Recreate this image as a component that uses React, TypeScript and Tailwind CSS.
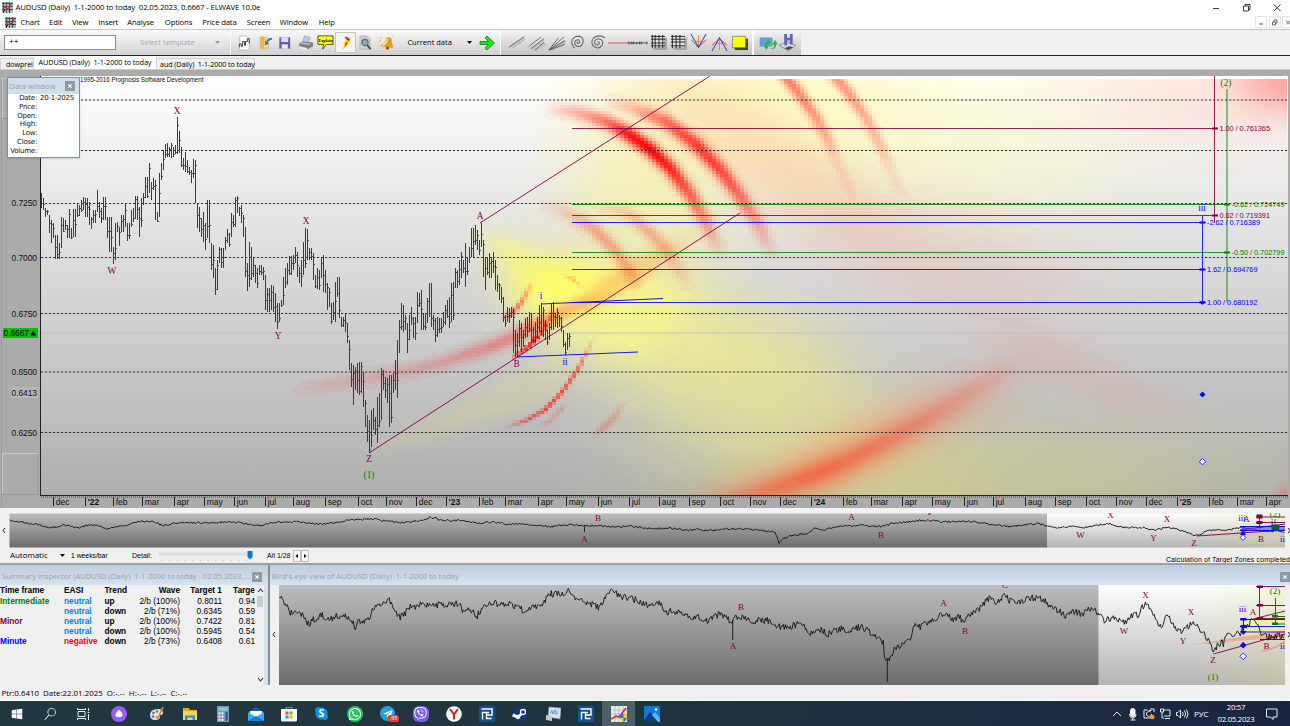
import type { ReactNode } from "react";
import { FaWhatsapp, FaViber, FaSkype, FaSteam, FaTelegramPlane, FaWindows } from "react-icons/fa";
import { VscSearch } from "react-icons/vsc";

type Point = [number, number];
type Bar = [number, number, number];

const MAROON = "#800040";
const GREEN = "#008000";
const BLUE = "#0000ff";

/* price bars: x, high, low - stored in thirds of a pixel from the origin of the block */
const BLOCK_A: number[] = [
    124, 100, 145, 130, 115, 150, 136, 145, 172, 148, 165, 220, 156, 180, 250, 162, 190, 235, 168, 225, 298, 175, 250, 298,
    181, 172, 265, 190, 175, 215, 200, 195, 235, 208, 148, 235, 216, 205, 238, 222, 148, 230, 232, 130, 170, 244, 120, 155,
    252, 112, 150, 258, 115, 170, 266, 125, 195, 275, 170, 208, 282, 150, 190, 289, 90, 155, 297, 125, 175, 304, 145, 190,
    312, 110, 180, 320, 170, 235, 330, 172, 275, 338, 260, 313, 344, 190, 300, 352, 185, 215, 358, 200, 258, 366, 165, 215,
    374, 130, 200, 385, 190, 238, 392, 150, 200, 400, 145, 185, 410, 108, 180, 417, 140, 230, 424, 115, 200, 432, 100, 135,
    438, 50, 115, 446, 10, 100, 452, 65, 120, 460, 55, 90, 466, 60, 180, 474, 155, 185, 480, 38, 170, 486, 10, 60,
    492, -30, 30, 498, -48, -5, 504, -50, -10, 510, -38, -8, 516, -52, -5, 522, -40, -10, 527, -45, -18, 531, -128, -18,
    537, -86, -22, 543, -38, 20, 549, -5, 30, 555, -25, 35, 561, 0, 40, 567, 20, 45, 574, 30, 70, 578, -2, 55,
    584, 0, 130, 590, 130, 205, 598, 140, 215, 604, 175, 230, 610, 155, 245, 616, 190, 270, 622, 120, 235, 628, 120, 250,
    634, 250, 330, 640, 255, 355, 646, 325, 405, 654, 300, 390, 660, 262, 310, 666, 265, 325, 674, 230, 270, 678, 207, 250,
    688, 220, 260, 694, 160, 232, 702, 165, 200, 708, 112, 200, 713, 108, 160, 720, 140, 168, 726, 135, 190, 732, 165, 232,
    738, 200, 350, 743, 310, 393, 750, 245, 380, 756, 262, 360, 762, 295, 350, 768, 315, 370, 774, 325, 385, 780, 315, 345,
    788, 320, 360, 796, 345, 450, 804, 385, 455, 812, 375, 450, 818, 378, 455, 824, 400, 485, 832, 430, 508, 838, 430, 485,
    843, 420, 440, 848, 350, 435, 855, 325, 385, 862, 310, 375, 870, 288, 345, 878, 285, 330, 884, 262, 310, 890, 275, 352,
    896, 320, 370, 904, 300, 380, 910, 245, 345, 918, 205, 325, 924, 208, 300, 930, 265, 300, 938, 280, 360, 946, 345, 385,
    956, 330, 390, 962, 290, 355, 967, 285, 395, 974, 330, 400, 980, 370, 450, 986, 385, 440, 994, 430, 492, 1000, 425, 480,
    1006, 365, 485, 1013, 350, 410, 1018, 350, 475, 1026, 470, 500, 1034, 462, 515, 1042, 490, 550, 1048, 540, 630,
    1054, 610, 680, 1060, 615, 735, 1066, 620, 690, 1076, 605, 705, 1086, 605, 700, 1092, 635, 740, 1098, 720, 800,
    1104, 765, 845, 1108, 780, 880, 1114, 750, 860, 1120, 745, 810, 1128, 770, 825, 1134, 710, 850, 1140, 700, 800,
    1146, 625, 780, 1152, 630, 690, 1158, 650, 715, 1164, 655, 730, 1170, 645, 800, 1176, 645, 790, 1182, 640, 700,
    1188, 600, 690, 1192, 540, 715, 1198, 480, 580, 1204, 430, 510, 1210, 435, 515, 1216, 465, 510, 1222, 490, 580,
    1228, 465, 540, 1234, 440, 495, 1240, 470, 535, 1248, 470, 540, 1254, 395, 490, 1260, 400, 440, 1266, 390, 510,
    1272, 460, 510, 1280, 415, 490, 1286, 370, 470,
];
const BLOCK_B: number[] = [
    150, 630, 730, 156, 640, 770, 162, 735, 780, 168, 745, 815, 174, 740, 800, 180, 745, 790, 188, 725, 770, 196, 705, 765,
    204, 690, 745, 210, 680, 775, 216, 640, 755, 222, 635, 750, 228, 595, 655, 234, 600, 655, 240, 570, 645, 246, 545, 625,
    252, 570, 610, 258, 520, 650, 264, 560, 615, 270, 530, 580, 276, 475, 560, 284, 465, 525, 290, 480, 540, 296, 510, 555,
    302, 458, 530, 308, 510, 620, 314, 560, 660, 320, 560, 615, 326, 550, 625, 332, 560, 625, 338, 545, 610, 344, 570, 660,
    350, 615, 665, 356, 640, 690, 362, 650, 700, 368, 680, 755, 374, 735, 770, 380, 710, 755, 386, 715, 760, 392, 710, 745,
    398, 715, 850, 404, 780, 860, 410, 790, 860, 416, 750, 830, 422, 760, 845, 428, 780, 830, 434, 745, 805, 440, 740, 800,
    446, 725, 785, 452, 730, 820, 458, 770, 820, 464, 755, 820, 470, 740, 805, 476, 705, 790, 482, 700, 795, 488, 710, 800,
    494, 750, 810, 500, 780, 825, 506, 760, 810, 512, 700, 780, 518, 695, 780, 524, 730, 770, 530, 715, 775, 536, 735, 770,
    542, 740, 785, 548, 780, 830, 554, 815, 855, 560, 790, 840, 567, 790, 830,
];

const toBars = (block: number[], ox: number, oy: number): Bar[] => {
    const out: Bar[] = [];
    for (let i = 0; i < block.length; i += 3) {
        out.push([ox + block[i] / 3, oy + block[i + 1] / 3, oy + block[i + 2] / 3]);
    }
    return out;
};

const keyBars = [...toBars(BLOCK_A, 0, 160), ...toBars(BLOCK_B, 380, 70)];

const noise = (n: number) => {
    const s = Math.sin(n * 127.1) * 43758.5453;
    return s - Math.floor(s) - 0.5;
};

const buildBars = () => {
    let bars = "";
    let ticks = "";
    let k = 0;
    for (let x = 41; x < 570; x += 2) {
        while (k < keyBars.length - 2 && keyBars[k + 1][0] < x) k++;
        const a = keyBars[k];
        const b = keyBars[k + 1];
        const near = Math.abs(a[0] - x) < Math.abs(b[0] - x) ? a : b;
        const hi = Math.round(near[1] + (Math.abs(near[0] - x) > 1 ? noise(x) * 5 : 0));
        const lo = Math.round(near[2] + (Math.abs(near[0] - x) > 1 ? noise(x + 7) * 5 : 0));
        const close = Math.round(hi + (lo - hi) * (0.5 + noise(x + 3) * 0.8));
        bars += `M${x + 0.5} ${hi}V${lo}`;
        ticks += `M${x + 1} ${close + 0.5}h1`;
    }
    return { bars, ticks };
};

/* target zones: x, y, strength along the arc, and the half width */
interface Zone {
    pts: Bar[];
    w: number;
}

const ZONES: Zone[] = [
    { w: 7.5, pts: [[540, 108, 0], [575, 112, 0.25], [605, 121, 0.5], [628, 134, 0.9], [650, 149, 1], [670, 168, 0.85], [690, 194, 0.6], [706, 222, 0.35], [718, 248, 0.1], [724, 262, 0]] },
    { w: 7.5, pts: [[600, 101, 0], [630, 107, 0.2], [665, 121, 0.55], [697, 145, 0.75], [722, 172, 0.7], [742, 199, 0.5], [757, 222, 0.3], [770, 250, 0.08], [776, 262, 0]] },
    { w: 7, pts: [[535, 204, 0], [565, 211, 0.12], [595, 230, 0.28], [615, 250, 0.28], [630, 272, 0.25], [640, 290, 0]] },
    { w: 7, pts: [[590, 205, 0], [625, 212, 0.14], [650, 232, 0.26], [670, 254, 0.2], [687, 284, 0.05], [692, 292, 0]] },
    { w: 6, pts: [[778, 68, 0.5], [795, 88, 0.48], [815, 116, 0.38], [828, 140, 0.26], [837, 162, 0.1], [850, 190, 0.06], [856, 204, 0]] },
    { w: 6, pts: [[828, 68, 0.42], [846, 90, 0.38], [865, 116, 0.3], [880, 145, 0.22], [890, 168, 0.09], [900, 190, 0.05], [905, 200, 0]] },
    { w: 2, pts: [[508, 427, 0.08], [525, 421, 0.45], [545, 410, 0.62], [562, 392, 0.62], [577, 371, 0.5], [588, 350, 0.2], [594, 335, 0]] },
    { w: 2.6, pts: [[535, 428, 0], [550, 421, 0.16], [560, 411, 0.15], [568, 398, 0]] },
    { w: 3.5, pts: [[590, 437, 0], [603, 428, 0.22], [615, 417, 0.16], [626, 400, 0]] },
    { w: 2.5, pts: [[500, 321, 0], [512, 314, 0.5], [521, 303, 0.45], [530, 287, 0.15], [533, 280, 0]] },
    { w: 2.2, pts: [[514, 357, 0.4], [528, 347, 0.9], [541, 334, 0.8], [549, 320, 0.7], [554, 308, 0]] },
    { w: 2, pts: [[560, 274, 0], [573, 279, 0.22], [584, 289, 0]] },
    { w: 7.5, pts: [[285, 392, 0], [320, 386, 0.08], [370, 378, 0.14], [430, 366, 0.18], [475, 352, 0.28], [505, 341, 0.34], [535, 326, 0.36], [570, 308, 0.2], [600, 298, 0.06], [620, 294, 0]] },
];

const CELL_W = 4;
const CELL_H = 3;
const LEVELS = 32;

const buildZoneCells = () => {
    const field = new Map<string, number>();
    ZONES.forEach(({ pts, w }) => {
        for (let i = 0; i < pts.length - 1; i++) {
            const [ax, ay, as] = pts[i];
            const [bx, by, bs] = pts[i + 1];
            const x0 = Math.floor((Math.min(ax, bx) - w * 2.5) / CELL_W);
            const x1 = Math.ceil((Math.max(ax, bx) + w * 2.5) / CELL_W);
            const y0 = Math.floor((Math.min(ay, by) - w * 2.5) / CELL_H);
            const y1 = Math.ceil((Math.max(ay, by) + w * 2.5) / CELL_H);
            const len2 = (bx - ax) ** 2 + (by - ay) ** 2;
            for (let cx = x0; cx < x1; cx++) {
                for (let cy = y0; cy < y1; cy++) {
                    const px = (cx + 0.5) * CELL_W;
                    const py = (cy + 0.5) * CELL_H;
                    const t = Math.max(0, Math.min(1, ((px - ax) * (bx - ax) + (py - ay) * (by - ay)) / len2));
                    const dist = Math.hypot(px - ax - t * (bx - ax), py - ay - t * (by - ay));
                    const v = (as + t * (bs - as)) * Math.exp(-((dist / w) ** 2));
                    const key = `${cx},${cy}`;
                    if (v > 0.015 && v > (field.get(key) || 0)) field.set(key, v);
                }
            }
        }
    });
    const paths: string[] = Array(LEVELS + 1).fill("");
    field.forEach((v, key) => {
        const [cx, cy] = key.split(",").map(Number);
        paths[Math.round(v * LEVELS)] += `M${cx * CELL_W} ${cy * CELL_H}h4v3h-4z`;
    });
    return paths;
};

const chartBars = buildBars();
const zonePaths = buildZoneCells();

const GRID_Y = [99.5, 150, 203, 257, 313, 371.5, 432];
const PRICES: [string, number][] = [
    ["0.7250", 203], ["0.7000", 258], ["0.6750", 313.5], ["0.6500", 372], ["0.6413", 393], ["0.6250", 433],
];
const MONTHS: [string, number][] = [
    ["dec", 53], ["'22", 85], ["feb", 113], ["mar", 142], ["apr", 174], ["may", 204], ["jun", 234], ["jul", 265],
    ["aug", 293], ["sep", 325], ["oct", 358], ["nov", 386], ["dec", 416], ["'23", 446], ["feb", 479], ["mar", 505],
    ["apr", 538], ["may", 566], ["jun", 598], ["jul", 629], ["aug", 659], ["sep", 689], ["oct", 720], ["nov", 750],
    ["dec", 780], ["'24", 811], ["feb", 843], ["mar", 871], ["apr", 902], ["may", 932], ["jun", 964], ["jul", 993],
    ["aug", 1025], ["sep", 1055], ["oct", 1086], ["nov", 1116], ["dec", 1146], ["'25", 1177], ["feb", 1209],
    ["mar", 1237], ["apr", 1266],
];
const WAVES: [string, number, number, string][] = [
    ["X", 177, 114, MAROON], ["W", 112, 274, MAROON], ["X", 306, 224, MAROON], ["Y", 278, 339, MAROON],
    ["A", 480, 219, MAROON], ["B", 516.5, 367, MAROON], ["Z", 369, 462, MAROON], ["(1)", 369, 478, GREEN],
    ["i", 541, 299, BLUE], ["ii", 565, 365, BLUE], ["iii", 1202, 211, BLUE], ["(2)", 1226, 86, GREEN],
];
/* label, y, x of the marker, colour */
const TARGETS: [string, number, number, string][] = [
    ["1.00 / 0.761365", 128, 1215, MAROON], ["-0.62 / 0.724749", 204, 1227, GREEN], ["0.62 / 0.719391", 215.5, 1215, MAROON],
    ["-2.62 / 0.716389", 222, 1202.5, BLUE], ["-0.50 / 0.702799", 252, 1227, GREEN], ["1.62 / 0.694769", 269.5, 1202.5, BLUE],
    ["1.00 / 0.680192", 302.5, 1202.5, BLUE],
];

const Blob = ({ id, cx, cy, rx, ry, rotate = 0 }: { id: string; cx: number; cy: number; rx: number; ry: number; rotate?: number }) => (
    <ellipse cx={cx} cy={cy} rx={rx} ry={ry} fill={`url(#${id})`} transform={`rotate(${rotate} ${cx} ${cy})`} />
);

const Radial = ({ id, color, alpha }: { id: string; color: string; alpha: number }) => (
    <radialGradient id={id}>
        <stop offset="0" stopColor={color} stopOpacity={alpha} />
        <stop offset="0.35" stopColor={color} stopOpacity={alpha * 0.78} />
        <stop offset="0.7" stopColor={color} stopOpacity={alpha * 0.25} />
        <stop offset="1" stopColor={color} stopOpacity={0} />
    </radialGradient>
);

const MainChart = () => (
    <svg width="1290" height="432" viewBox="0 76 1290 432" className="block shrink-0 font-['Liberation_Sans',Arial,sans-serif]">
        <defs>
            <linearGradient id="sky" x1="0" y1="0" x2="0" y2="1">
                <stop offset="0" stopColor="#ffffff" />
                <stop offset="1" stopColor="#afafaf" />
            </linearGradient>
            <Radial id="hot" color="#ffff58" alpha={0.85} />
            <Radial id="cream" color="#fff2a0" alpha={0.55} />
            <Radial id="lemon" color="#f8f49a" alpha={0.6} />
            <Radial id="pale" color="#ffffa8" alpha={0.3} />
            <Radial id="olive" color="#f0f08c" alpha={0.55} />
            <Radial id="moss" color="#e0e07a" alpha={0.42} />
            <Radial id="amber" color="#ffb050" alpha={0.55} />
            <Radial id="peach" color="#ffa080" alpha={0.26} />
            <Radial id="rose" color="#e89080" alpha={0.17} />
            <Radial id="corner" color="#ff4040" alpha={0.42} />
            <clipPath id="plot">
                <rect x="41" y="76" width="1247" height="419" />
            </clipPath>
            <clipPath id="heat">
                <rect x="41" y="79" width="1246" height="416" />
            </clipPath>
            <linearGradient id="sweep" gradientUnits="userSpaceOnUse" x1="690" y1="0" x2="1050" y2="0">
                <stop offset="0" stopColor="#ff5030" stopOpacity="0.25" />
                <stop offset="0.35" stopColor="#f84c30" stopOpacity="0.75" />
                <stop offset="0.6" stopColor="#f05040" stopOpacity="0.5" />
                <stop offset="0.85" stopColor="#e86858" stopOpacity="0.22" />
                <stop offset="1" stopColor="#e08070" stopOpacity="0" />
            </linearGradient>
            <filter id="b6" x="-30%" y="-30%" width="160%" height="160%"><feGaussianBlur stdDeviation="6" /></filter>
            <filter id="b14" x="-30%" y="-30%" width="160%" height="160%"><feGaussianBlur stdDeviation="14" /></filter>
        </defs>
        <rect x="0" y="76" width="1290" height="432" fill="#ababab" />
        <rect x="41" y="76" width="1247" height="419" fill="url(#sky)" />

        <g clipPath="url(#heat)">
            <Blob id="cream" cx={740} cy={95} rx={230} ry={170} />
            <Blob id="lemon" cx={640} cy={215} rx={130} ry={150} />
            <Blob id="pale" cx={870} cy={100} rx={320} ry={120} />
            <Blob id="pale" cx={950} cy={170} rx={280} ry={110} />
            <Blob id="olive" cx={760} cy={405} rx={270} ry={130} rotate={22} />
            <Blob id="moss" cx={960} cy={490} rx={420} ry={115} />
            <Blob id="olive" cx={690} cy={340} rx={200} ry={90} rotate={12} />
            <path d="M482 228L600 262L700 290L640 360L570 340L500 300Z" fill="#ffff70" fillOpacity="0.45" filter="url(#b14)" />
            <path d="M482 230L560 264L560 300L525 290Z" fill="#ffff58" fillOpacity="0.32" filter="url(#b6)" />
            <path d="M369 452L560 350L560 400L420 442Z" fill="#e8e870" fillOpacity="0.18" filter="url(#b6)" />
            <Blob id="hot" cx={568} cy={288} rx={75} ry={44} />
            <Blob id="pale" cx={600} cy={320} rx={130} ry={70} />
            <Blob id="amber" cx={625} cy={278} rx={100} ry={20} rotate={-32} />
            <Blob id="peach" cx={780} cy={165} rx={230} ry={65} rotate={34} />
            <Blob id="rose" cx={930} cy={250} rx={240} ry={90} rotate={18} />
            <Blob id="rose" cx={1080} cy={370} rx={150} ry={40} rotate={25} />
            <Blob id="peach" cx={1230} cy={80} rx={240} ry={100} />
            <Blob id="corner" cx={1295} cy={75} rx={90} ry={60} />
            <Blob id="corner" cx={1290} cy={500} rx={22} ry={22} />
            <Blob id="peach" cx={870} cy={440} rx={240} ry={60} rotate={-26} />
            <path d="M690 512C770 490 800 482 842 463C890 441 950 410 1050 350" fill="none" stroke="url(#sweep)" strokeWidth="22" filter="url(#b14)" />
            <path d="M700 512C780 488 810 477 842 463C890 441 940 412 1010 368" fill="none" stroke="url(#sweep)" strokeWidth="12" filter="url(#b6)" />
            {zonePaths.map((d, i) => (
                <path key={i} d={d} fill="#ff0000" fillOpacity={i / LEVELS} shapeRendering="crispEdges" />
            ))}
        </g>

        <g clipPath="url(#plot)" fill="none">
            {GRID_Y.map((y) => (
                <line key={y} x1="41" x2="1288" y1={y + 0.5} y2={y + 0.5} stroke="#333" strokeDasharray="2.2 1.8" />
            ))}
            <path d="M41 333H1288" stroke="#bcbcbc" strokeWidth="0.8" />
            <path d={chartBars.bars} stroke="#3c3c3c" strokeWidth="1" shapeRendering="crispEdges" />
            <path d={chartBars.ticks} stroke="#555" strokeWidth="1" shapeRendering="crispEdges" />
            <path d="M369 453L740 213M480 223L710 76" stroke={MAROON} strokeWidth="0.9" />
            <path d="M541 304L663 298.5M517 357L638 352" stroke={BLUE} strokeWidth="0.9" />
            <g shapeRendering="crispEdges" strokeOpacity="0.85">
                {TARGETS.map(([label, y, x, color]) => (
                    <path key={label} d={`M572 ${Math.floor(y) + 0.5}H${x}`} stroke={color} />
                ))}
                <path d="M1214.5 76V223" stroke={MAROON} />
                <path d="M1202.5 216V302" stroke={BLUE} />
            </g>
            <path d="M1227 89V302" stroke={GREEN} strokeOpacity="0.55" strokeWidth="1.6" />
        </g>

        {TARGETS.map(([label, y, x, color]) => (
            <g key={label} fill={color}>
                <rect x={x - 3} y={Math.floor(y) - 0.5} width="6" height="2" />
                <text x={x + 4.5} y={y + 2.8} fontSize="7.4" textLength={label.length > 15 ? 53 : 50.5}>
                    {label}
                </text>
            </g>
        ))}
        <path d="M1199.5 301.5h6l-3 3.5z" fill={BLUE} />
        <path d="M1202.5 391.5l3 3l-3 3l-3-3z" fill={BLUE} />
        <path d="M1202.5 458.5l3.2 3.2l-3.2 3.2l-3.2-3.2z" fill="#fff" stroke={BLUE} strokeWidth="0.8" />

        {WAVES.map(([label, x, y, color], i) => (
            <text key={i} x={x} y={y} fill={color} fontSize="9.3" textAnchor="middle" className="font-['Liberation_Serif',serif]">
                {label}
            </text>
        ))}
        <text x="80" y="82" fontSize="6.3" fill="#111" textLength="123.5">1995-2016 Prognosis Software Development</text>

        {/* price axis */}
        <path d="M2.5 118V78.5H38M2.5 493V453.5H38" fill="none" stroke="#c8c8c8" />
        <path d="M38 78.5V118.5H3M38 453.5V494.5H2.5" fill="none" stroke="#999" />
        <path d="M1.5 82V508" stroke="#9c9c9c" />
        {PRICES.map(([label, y]) => (
            <g key={label}>
                {label === "0.6413" && <rect x="11" y="387" width="27" height="11" fill="#b6b6b6" />}
                <text x="37" y={y + 3} fontSize="8.5" textAnchor="end" textLength="25.5" fill="#111">
                    {label}
                </text>
            </g>
        ))}
        <rect x="3" y="328" width="35" height="10" fill="#00c000" />
        <text x="3.5" y="336" fontSize="8.5" textLength="25.5">0.6667</text>
        <path d="M30.5 335.5h5.5l-2.75-5z" />
        <path d="M40.5 76V495.5H1288" fill="none" stroke="#222" shapeRendering="crispEdges" />

        {/* time axis */}
        <path d="M41 497H1288" stroke="#444" strokeWidth="1" strokeDasharray="1 1" />
        {MONTHS.map(([label, x]) => (
            <g key={x}>
                <path d={`M${x + 0.5} 497V506`} stroke="#222" shapeRendering="crispEdges" />
                <text x={x + 2.7} y="504.6" fontSize="8.5" fontWeight={label[0] === "'" ? 700 : 400} fill="#111">
                    {label}
                </text>
            </g>
        ))}
    </svg>
);

/* overview lines, thirds of a pixel below y=490 */
const third = (flat: number[], ox: number): Point[] => {
    const out: Point[] = [];
    for (let i = 0; i < flat.length; i += 2) out.push([ox + flat[i] / 3, 490 + flat[i + 1] / 3]);
    return out;
};

const BIRD: Point[] = [
    ...third([838, 325, 848, 330, 858, 345, 870, 365, 880, 375, 895, 370, 910, 370, 920, 395, 930, 405, 940, 380, 950, 402, 962, 370, 975, 380, 990, 388, 1005, 380, 1015, 380, 1030, 370, 1045, 380, 1060, 400, 1066, 412, 1075, 395, 1090, 395, 1105, 390, 1115, 370, 1125, 345, 1140, 345, 1150, 335, 1165, 328, 1175, 335, 1185, 368, 1200, 382, 1215, 370, 1230, 348, 1245, 355, 1260, 345, 1280, 345], 0),
    ...third([0, 340, 20, 345, 50, 345, 85, 340, 100, 362, 120, 355, 140, 382, 160, 345, 190, 337, 210, 345, 230, 337, 250, 350, 285, 362, 320, 350, 340, 340, 360, 308, 370, 315, 390, 312, 415, 302, 430, 322, 455, 325, 470, 340, 505, 350, 530, 320, 550, 300, 570, 320, 600, 325, 635, 335, 655, 350, 690, 342, 705, 365, 760, 365, 785, 385, 800, 378, 835, 395, 855, 378, 875, 370, 905, 395, 911, 385, 935, 380, 960, 392, 1010, 390, 1050, 410, 1080, 410, 1115, 400, 1135, 428, 1155, 430, 1175, 417, 1195, 433, 1230, 415, 1255, 425], 430),
    ...third([0, 410, 20, 420, 40, 435, 70, 455, 75, 510, 81, 515, 88, 510, 100, 480, 125, 465, 150, 455, 163, 402, 180, 412, 210, 395, 235, 380, 255, 368, 270, 375, 280, 395, 295, 380, 315, 397, 325, 380, 345, 365, 365, 350, 385, 325, 405, 335, 420, 328, 433, 314, 445, 330, 470, 343, 490, 330, 515, 322, 550, 330, 570, 345, 590, 360, 620, 378, 640, 362, 665, 375, 695, 352, 715, 375, 730, 390, 765, 385, 793, 398, 815, 375, 835, 375, 848, 352, 858, 344, 875, 360, 890, 390, 903, 412, 922, 380, 940, 405, 965, 428, 985, 410, 1000, 397, 1020, 415, 1045, 450, 1062, 488, 1075, 460, 1090, 460, 1100, 428, 1120, 430, 1140, 430, 1160, 405, 1175, 395, 1190, 402, 1205, 430, 1220, 440, 1240, 440, 1260, 435, 1272, 440], 860),
];
const STRIP: Point[] = [
    ...third([30, 92, 60, 95, 90, 102, 120, 105, 150, 114, 175, 110, 190, 103, 215, 110, 240, 112, 265, 105, 300, 108, 320, 117, 350, 110, 380, 108, 400, 97, 450, 93, 490, 107, 520, 100, 560, 97, 600, 99, 700, 96, 740, 102, 780, 107, 830, 96, 890, 95, 950, 102, 1000, 99, 1050, 90, 1125, 86, 1150, 92, 1200, 98, 1260, 92], 0),
    ...third([0, 83, 15, 82, 25, 90, 100, 92, 150, 100, 190, 96, 230, 102, 280, 103, 360, 110, 420, 104, 461, 108, 500, 107, 560, 112, 590, 108, 650, 115, 720, 115, 780, 121, 800, 118, 830, 123, 900, 116, 970, 118, 1035, 127, 1048, 162, 1055, 148, 1080, 138, 1130, 130, 1155, 115, 1180, 120, 1220, 110], 430),
    ...third([0, 105, 60, 110, 90, 102, 150, 95, 208, 90, 240, 96, 330, 94, 370, 100, 450, 110, 530, 100, 590, 113, 640, 108, 670, 113, 745, 100, 790, 112, 850, 113, 880, 120, 925, 111, 975, 125, 1010, 138, 1050, 120, 1100, 120, 1145, 112, 1200, 122, 1272, 124], 860),
];

const wiggle = (pts: Point[], amp: number) => {
    let d = "";
    let k = 0;
    for (let x = pts[0][0]; x <= pts[pts.length - 1][0]; x += 1) {
        while (k < pts.length - 2 && pts[k + 1][0] < x) k++;
        const [ax, ay] = pts[k];
        const [bx, by] = pts[k + 1];
        const y = ay + ((by - ay) * (x - ax)) / (bx - ax || 1) + noise(x) * amp;
        d += `${d ? "L" : "M"}${x.toFixed(1)} ${y.toFixed(1)}`;
    }
    return d;
};

/* long thin spikes fall between samples, so they are drawn apart */
const birdPath = wiggle(BIRD, 7) + "M732.7 620V640M887.3 658V682";
const stripPath = wiggle(STRIP, 2) + "M584.5 526V532";

const Labels = ({ items }: { items: [string, number, number, string][] }) => (
    <>
        {items.map(([label, x, y, color], i) => (
            <text key={i} x={x} y={y} fill={color} fontSize="9" textAnchor="middle" className="font-['Liberation_Serif',serif]">
                {label}
            </text>
        ))}
    </>
);

const Shades = () => (
    <defs>
        <linearGradient id="dark" x1="0" y1="0" x2="0" y2="1">
            <stop offset="0" stopColor="#bdbdbd" />
            <stop offset="1" stopColor="#6c6c6c" />
        </linearGradient>
        <linearGradient id="light" x1="0" y1="0" x2="0" y2="1">
            <stop offset="0" stopColor="#ffffff" />
            <stop offset="1" stopColor="#b4b4b4" />
        </linearGradient>
        <linearGradient id="tint" x1="0" y1="0" x2="1" y2="0">
            <stop offset="0" stopColor="#e8e080" stopOpacity="0" />
            <stop offset="1" stopColor="#e8e080" stopOpacity="0.25" />
        </linearGradient>
    </defs>
);

const Strip = () => (
    <svg width="1290" height="35" viewBox="0 513 1290 35" className="block shrink-0 bg-[#f0f0f0]">
        <Shades />
        <rect x="9.5" y="513.5" width="1038" height="34" fill="url(#dark)" />
        <rect x="1047" y="513.5" width="238" height="34" fill="url(#light)" />
        <rect x="1195" y="513.5" width="90" height="34" fill="url(#tint)" />
        <path d="M1197 536L1285 524L1285 536Z" fill="#f0a080" fillOpacity="0.25" />
        <path d={stripPath} fill="none" stroke="#1a1a1a" strokeWidth="0.9" />
        <path d="M1197 536L1285 530M1240 530L1285 524M1259.5 515V529M1256 517H1285M1256 522.5H1285" stroke={MAROON} strokeWidth="0.9" fill="none" />
        <path d="M1256.5 514.5h6v4h-6zM1256.5 521h6v3h-6zM1256.5 526h6v2h-6z" fill={MAROON} />
        <rect x="1241" y="526" width="44" height="4" fill="#4040ff" fillOpacity="0.5" />
        <path d="M1240 526.5H1285M1240 530.5H1285M1241 532h5" stroke={BLUE} strokeWidth="0.9" />
        <path d="M1272 525h7v5h-7zM1275 519v8" fill="#006040" stroke="#006040" strokeWidth="0.8" />
        <path d="M1243 531l3 4h-6z" fill={BLUE} />
        <path d="M1243 534.5l2.8 3l-2.8 3l-2.8-3z" fill="#fff" stroke={BLUE} strokeWidth="0.8" />
        <Labels
            items={[
                ["B", 598, 521, MAROON], ["A", 584.5, 542, MAROON], ["A", 851.5, 520, MAROON], ["B", 881, 538, MAROON],
                ["W", 1080.5, 538, MAROON], ["Y", 1153.5, 541, MAROON], ["X", 1167, 522, MAROON], ["X", 1110.5, 518, MAROON],
                ["Z", 1194, 545.5, MAROON], ["iii", 1242, 521, BLUE], ["A", 1246.5, 522, MAROON], ["B", 1261, 542, MAROON],
                ["(2)", 1275, 516.5, GREEN], ["i", 1272, 525, BLUE], ["ii", 1282.5, 542, BLUE],
            ]}
        />
        <path d="M928 514h3" stroke={MAROON} />
        <path d="M5 528l-2 2.5l2 2.5M1288 528l2 2.5l-2 2.5" fill="none" stroke="#222" />
    </svg>
);

const BirdsEye = () => (
    <svg width="1020" height="100" viewBox="270 585 1020 100" className="block bg-[#f0f0f0]">
        <rect x="279" y="585" width="820" height="100" fill="url(#dark)" />
        <rect x="1098.5" y="585" width="186.5" height="100" fill="url(#light)" />
        <rect x="1195" y="585" width="90" height="100" fill="url(#tint)" />
        <rect x="1243" y="618" width="42" height="18" fill="#ffff80" fillOpacity="0.45" />
        <path d="M1190 645L1285 630L1285 637Z" fill="#f08060" fillOpacity="0.45" />
        <path d="M1262 651Q1278 648 1285 641" fill="none" stroke="#f06050" strokeWidth="1.5" strokeOpacity="0.5" />
        <path d={birdPath} fill="none" stroke="#1a1a1a" strokeWidth="0.95" />
        <path d="M1213.5 654L1285 634M1253 619L1285 611M1259.5 586V619M1256 586.5H1285M1256 605.5H1285M1256 618.5H1285" stroke={MAROON} strokeWidth="0.9" fill="none" />
        <path d="M1257 585.5h6v2.5h-6zM1257 604h6v2.5h-6zM1257 617h6v2.5h-6z" fill={MAROON} />
        <path d="M1243.5 619V632M1240 619.5H1285M1240 626.5H1285M1240 632H1285M1260 639.5H1285" stroke={BLUE} strokeWidth="0.9" fill="none" />
        <path d="M1240.5 618h6v2.5h-6zM1240.5 625h6v2.5h-6zM1240.5 631h6l-3 4zM1243.2 642l3.3 3.3l-3.3 3.3l-3.3-3.3z" fill={BLUE} />
        <path d="M1275.5 598V624M1272 616.5H1285M1272 624H1285" stroke={GREEN} />
        <path d="M1272 615h6v2.5h-6zM1272 622.5h6v2.5h-6z" fill={GREEN} />
        <path d="M1243.2 653l3.3 3.3l-3.3 3.3l-3.3-3.3z" fill="#fff" stroke={BLUE} strokeWidth="0.8" />
        <Labels
            items={[
                ["B", 741, 610, MAROON], ["A", 733, 649, MAROON], ["A", 943.5, 606, MAROON], ["B", 965, 634, MAROON],
                ["C", 1005, 588, MAROON], ["W", 1124, 634, MAROON], ["X", 1145.5, 598, MAROON], ["Y", 1183, 644, MAROON],
                ["X", 1191, 615, MAROON], ["Z", 1213, 663, MAROON], ["(1)", 1213, 680, GREEN], ["iii", 1242.5, 612, BLUE],
                ["A", 1253, 615, MAROON], ["(2)", 1275, 594, GREEN], ["B", 1266.5, 648.5, MAROON], ["ii", 1282.5, 649, BLUE],
            ]}
        />
        <path d="M275 632l-2 2.5l2 2.5M1288 632l2 2.5l-2 2.5" fill="none" stroke="#222" />
    </svg>
);

const AppIcon = () => (
    <svg width="11" height="11" viewBox="0 0 11 11">
        <rect width="11" height="11" fill="#a8bcbc" />
        <path d="M0 1.5h11M0 4.500h11M0 7.500h11M1.500 0v11M4.500 0v11M7.500 0v11" stroke="#355" strokeWidth="0.9" />
        <path d="M0 8l3-3l3 2l4-6" stroke="#d82828" strokeWidth="1.3" fill="none" />
        <path d="M1 10l2-2M7 9l2-2" stroke="#111" />
    </svg>
);

const Slot = ({ children, pressed }: { children: ReactNode; pressed?: boolean }) => (
    <div
        className={
            pressed
                ? "flex h-[21px] w-[20.3px] shrink-0 items-center justify-center border border-[#c4c4c4] bg-[#f4f4f4]"
                : "flex h-[21px] w-[20.3px] shrink-0 items-center justify-center"
        }
    >
        <svg width="17" height="17" viewBox="0 0 18 18" className="shrink-0 overflow-visible">
            {children}
        </svg>
    </div>
);

const FileTools = () => (
    <div className="flex">
        <Slot>
            <path d="M4 2h7l3 3v12H4z" fill="#fff" stroke="#aaa" strokeWidth="0.7" />
            <path d="M3.5 14v-3.500h2V13H7V8h2v4h1V8h2V5h2v5" fill="none" stroke="#222" strokeWidth="0.9" />
        </Slot>
        <Slot>
            <path d="M4 3l5-1v13l-5 1z" fill="#e8b850" />
            <path d="M8 4h5v11l-5 2z" fill="#f6d580" stroke="#d8a030" strokeWidth="0.5" />
            <path d="M17 4q-4 0-6 4l-1.500-1v5l4.500-2l-1.500-1q1-3 4.500-3z" fill="#2878d8" />
        </Slot>
        <Slot>
            <path d="M3.5 3.5h11.5v12H3.500z" fill="#6a58b8" />
            <path d="M5.500 3.500h7.500v5H5.500z" fill="#dce0ff" />
            <path d="M6 11h6.500v4.500H6z" fill="#eee" />
        </Slot>
        <Slot>
            <path d="M8 2l6 1.500l-2 6l-6-1z" fill="#b4ccec" stroke="#889" strokeWidth="0.5" />
            <path d="M2 10l4-2l11 1v4l-5 3l-9-2z" fill="#808080" />
            <path d="M3 13l8 2l-2 2l-6-2z" fill="#eee" />
            <path d="M4 9.5l10 1.5" stroke="#ddd" />
        </Slot>
        <Slot>
            <path d="M1 2h16v9h-7l-4 5l1-5H1z" fill="#ff0" stroke="#222" strokeWidth="0.8" />
            <text x="9" y="8.3" fontSize="4.5" fontWeight="700" textAnchor="middle" className="font-['Liberation_Serif',serif]">Explain</text>
        </Slot>
        <Slot pressed>
            <path d="M8 3l5 2l1 2l-7 9.500l-1-.5l1.500-4.500l-1-2l3-2z" fill="#ffd800" />
            <path d="M8 3q4 0 6 3.500l-3 .5zM9.500 8.500l2 1l-3.500 4.500z" fill="#f01818" />
        </Slot>
        <Slot>
            <path d="M3 2h8l3 3v11H3z" fill="#ccc" stroke="#aaa" strokeWidth="0.6" />
            <circle cx="8.5" cy="9" r="3.3" fill="#8ab" stroke="#666" strokeWidth="1.1" />
            <path d="M11 12l3.5 4" stroke="#445" strokeWidth="1.8" />
        </Slot>
        <Slot>
            <path d="M2 12q5-1.500 6-6q1-3.500 4-2.500q3 1 2.500 4.500q0 3 2 6q-6 2-14.500-2z" fill="#e8982c" />
            <path d="M5 12q4-2 5-7" stroke="#ffe49c" strokeWidth="1.8" fill="none" />
            <path d="M2 5l2-2M1 8l2-1M16 3l-1-1" stroke="#e0a040" />
            <circle cx="10" cy="15" r="1.5" fill="#b03010" />
        </Slot>
    </div>
);

const DrawTools = () => (
    <div className="flex">
        <Slot>
            <path d="M4 15L18 5" stroke="#bbb" strokeWidth="2" />
            <path d="M1 14L17 3" stroke="#555" />
        </Slot>
        <Slot>
            <path d="M4 16L17 7M8 18L19 10" stroke="#c0c0c0" strokeWidth="2" />
            <path d="M1 13L14 3M3 15.500L17 5M7 17L17 9" stroke="#555" strokeWidth="0.9" />
        </Slot>
        <Slot>
            <path d="M3 17L18 8" stroke="#bbb" strokeWidth="3" />
            <path d="M1 17L17 3M1 17L18 7M1 17L18 11M1 17L11 4" stroke="#555" strokeWidth="0.9" />
        </Slot>
        <Slot><path d="M6 15Q1 10 4 5Q9 0 14 4Q17 9 12 13Q7 14 6 10Q6 6 10 6Q13 8 10 10Q8 10 9 8" fill="none" stroke="#666" strokeWidth="1.1" /></Slot>
        <Slot><path d="M17 4Q11 0 5 4Q1 9 5 13Q10 17 14 12Q16 6 10 5Q5 6 6 10Q9 13 11 10Q11 8 9 8.5" fill="none" stroke="#666" strokeWidth="1.1" /></Slot>
        <Slot><path d="M-1 9.500h20" stroke="#e04848" strokeWidth="1" /></Slot>
        <Slot><path d="M-2 9.500h21M0 8v3M3 8v3M5 8v3M8 8.500v2.500M11 8v3M13 8v3M19 8v3" stroke="#333" strokeWidth="0.9" /></Slot>
        <Slot>
            <path d="M4 4h14v13H4z" fill="#a8a8a8" />
            <path d="M2 2h13v12H2z" fill="#e8e8e8" />
            <path d="M1 2.500h15M1 5.500h15M1 9.500h15M1 12.500h15M2.500 1v14M5.500 1v14M9.500 1v14M13.500 1v14" stroke="#222" strokeWidth="1" />
        </Slot>
        <Slot>
            <path d="M4 4h14v13H4z" fill="#a8a8a8" />
            <path d="M2 2h13v12H2z" fill="#e8e8e8" />
            <path d="M1 2.500h15M1 5.500h15M1 8.500h15M1 12.500h15M2.500 1v14M6.500 1v14M10.500 1v14" stroke="#222" strokeWidth="1" />
        </Slot>
        <Slot>
            <path d="M1 6L9 14L17 6" fill="none" stroke="#f03030" />
            <path d="M9 1v13M6 8h6" stroke="#f09020" strokeWidth="1.2" />
            <path d="M1 0L9 14L17 0" fill="none" stroke="#4040d8" strokeWidth="1.1" />
        </Slot>
        <Slot>
            <path d="M1 12L9 5L17 12" fill="none" stroke="#f03030" />
            <path d="M9 5v12M6 10h6" stroke="#f09020" strokeWidth="1.2" />
            <path d="M1 18L9 4L17 18" fill="none" stroke="#4040c0" strokeWidth="1.1" />
        </Slot>
        <Slot>
            <path d="M4 5h14v12H4z" fill="#444" />
            <path d="M1.5 2.5h14v12h-14z" fill="#ff0" stroke="#554" strokeWidth="0.6" />
        </Slot>
    </div>
);

const Toolbar = () => (
    <div className="flex h-[26px] shrink-0 items-center border-t border-[#c8c8c8] bg-[#f0f0f0]">
        <div className="flex h-full w-[230px] items-center bg-gradient-to-b from-[#fafafa] to-[#d4d4d4] pl-1">
            <div className="h-[15px] w-[112px] border border-[#8c8c8c] bg-white pl-1 font-['Liberation_Mono',monospace] text-[8px] leading-[12px]">++</div>
            <span className="ml-[24px] w-[75px] text-[7.6px] text-[#a8a8a8]">Select template</span>
            <svg width="6" height="4" viewBox="0 0 6 4"><path d="M0 0h5L2.5 3z" fill="#999" /></svg>
        </div>
        <div className="flex h-full w-[270px] items-center border-l border-[#fafafa] bg-gradient-to-b from-[#fafafa] to-[#cfcfcf] pl-[3px]">
            <FileTools />
            <span className="ml-[11px] w-[60px] whitespace-nowrap text-[7.5px]">Current data</span>
            <svg width="6" height="4" viewBox="0 0 6 4"><path d="M0 0h5L2.5 3z" /></svg>
            <svg width="17" height="16" viewBox="0 0 17 16" className="ml-[6px]">
                <path d="M1 6.500h8.500L6 3l2-2l7.500 7L8 15l-2-2l3.500-3.500H1z" fill="#18e818" stroke="#108010" strokeWidth="0.8" />
            </svg>
        </div>
        <div className="flex h-full w-[252px] items-center border-l border-[#fafafa] bg-gradient-to-b from-[#f4f4f4] to-[#c4c4c4] pl-[5px]">
            <DrawTools />
        </div>
        <div className="flex h-full w-[49px] items-center border-l-2 border-[#fafafa] bg-gradient-to-b from-[#f4f4f4] to-[#c4c4c4] pl-[3px]">
            <Slot>
                <path d="M1 4h13v9H1z" fill="#5ca4d8" stroke="#999" strokeWidth="0.7" />
                <path d="M6 13q0-5 5-6v-2l1 4l-2 2q-1 1-1 2h1l-2 4l-3-4zM13 16h-2l4-1q1-1 1-4h-2l3-5l3 5h-2q0 5-5 5z" fill="#20c030" />
            </Slot>
            <Slot>
                <path d="M0 12l8-4l10 4l-8 6z" fill="#d4d4dc" stroke="#778" strokeWidth="0.8" />
                <path d="M6 15l5-2l4 1l-5 3z" fill="#445" />
                <path d="M5.500 0h3v4h3V0h3v11h-3V7h-3v5h-3z" fill="#6464b4" />
            </Slot>
        </div>
    </div>
);

const MENU = [
    ["Chart", "w-[28.5px]"], ["Edit", "w-[23px]"], ["View", "w-[26.3px]"], ["Insert", "w-[29px]"], ["Analyse", "w-[37.5px]"],
    ["Options", "w-[37.5px]"], ["Price data", "w-[44.5px]"], ["Screen", "w-[33px]"], ["Window", "w-[39px]"], ["Help", "w-[24px]"],
];

const CloseBox = () => (
    <svg width="10" height="10" viewBox="0 0 10 10" className="shrink-0">
        <rect width="10" height="10" fill="#8d9aa6" />
        <path d="M3.3 3.3l3.4 3.4M6.7 3.3L3.3 6.7" stroke="#fff" strokeWidth="1.1" />
    </svg>
);

const Header = () => (
    <>
        <div className="flex h-[15px] shrink-0 items-center bg-white pl-[2px]">
            <AppIcon />
            <span className="ml-[2.5px] flex-1 whitespace-pre text-[7.8px] tracking-[-0.14px]">AUDUSD (Daily)  1-1-2000 to today  02.05.2023, 0.6667 - ELWAVE 10.0e</span>
            <svg width="78" height="14" viewBox="1212 0 78 14" fill="none" stroke="#222">
                <path d="M1213 7.5h6M1243.5 5h5v5h-5zM1245 5V3.5h5v5h-1.5M1274 3.5l6.5 6.5M1280.5 3.5L1274 10" strokeWidth="0.9" />
            </svg>
        </div>
        <div className="flex h-[14px] shrink-0 items-center bg-white pl-[5px]">
            <AppIcon />
            <div className="ml-[4.5px] flex flex-1 text-[7.7px] tracking-[-0.14px]">
                {MENU.map(([name, width]) => (
                    <span key={name} className={width + " shrink-0 whitespace-nowrap"}>{name}</span>
                ))}
            </div>
            <svg width="36" height="12" viewBox="1254 16 36 12" fill="none" stroke="#567">
                <path d="M1255.5 16.5h11v11h-11zM1269.5 16.5h11v11h-11zM1282.5 16.5h11v11h-11z" stroke="#e4e4e4" />
                <path d="M1259 24h4M1272.5 22h3v3h-3zM1274 22v-2h3v3h-1.5M1286 20.5l4 4M1290 20.5l-4 4" />
            </svg>
        </div>
        <Toolbar />
        <div className="flex h-[14px] shrink-0 items-end border-t border-[#222] bg-[#f0f0f0] text-[7.2px] tracking-[-0.1px]">
            <div className="h-[11px] w-[34px] border border-b-0 border-[#d4d4d4] pl-[5px] leading-[11px]">dowprel</div>
            <div className="h-[13px] w-[122px] whitespace-pre bg-white pl-[4.5px] text-[7.3px] leading-[12px]">AUDUSD (Daily)  1-1-2000 to today</div>
            <div className="h-[11px] w-[99px] whitespace-pre border border-b-0 border-[#d4d4d4] pl-[3px] leading-[11px]">aud (Daily)  1-1-2000 to today</div>
        </div>
        <div className="h-[7px] shrink-0 border-t border-[#ccc] bg-[#ababab]" />
    </>
);

const DataWindow = () => (
    <div className="absolute left-[7px] top-[1px] h-[81px] w-[73px] border border-[#7c8ea0] bg-white shadow-sm">
        <div className="flex h-[16px] items-center justify-between bg-[#d0dfec] pl-[1px] pr-[4px] text-[7.8px] tracking-[-0.1px] text-[#9a9fa5]">
            Data window
            <CloseBox />
        </div>
        <div className="text-[7px] leading-[8.8px] text-[#111]">
            {[["Date:", "20-1-2025"], ["Price:", ""], ["Open:", ""], ["High:", ""], ["Low:", ""], ["Close:", ""], ["Volume:", ""]].map(([k, v]) => (
                <div key={k} className="flex font-['DejaVu_Sans',sans-serif] tracking-[-0.25px]">
                    <span className="w-[29px] text-right">{k}</span>
                    <span className="ml-[3px]">{v}</span>
                </div>
            ))}
        </div>
    </div>
);

const Controls = () => (
    <div className="flex h-[15px] shrink-0 items-center bg-[#f0f0f0] pl-[10px] font-['Liberation_Sans',Arial,sans-serif] text-[7px]">
        <span className="w-[50px] font-['Open_Sans',sans-serif] text-[7.9px]">Automatic</span>
        <svg width="6" height="4" viewBox="0 0 6 4"><path d="M0 0h5L2.5 3z" /></svg>
        <span className="ml-[5px] w-[61px] text-[6.8px]">1 weeks/bar</span>
        <span className="w-[27px]">Detail:</span>
        <svg width="94" height="14" viewBox="0 0 94 14">
            <rect x="0.5" y="4" width="90" height="2" fill="#e4e4e4" stroke="#cfcfcf" strokeWidth="0.5" />
            <path d="M2.5 11.5H90" stroke="#bbb" strokeWidth="2" strokeDasharray="0.8 6.9" />
            <path d="M88.5 2h5v6L91 10.5L88.5 8z" fill="#0078d7" />
        </svg>
        <span className="ml-[14px] w-[25.5px] whitespace-nowrap text-[6.9px]">Alt 1/28</span>
        <svg width="16" height="12" viewBox="0 0 16 12">
            <path d="M0.5 0.5h7v11h-7zM8.5 0.5h7v11h-7z" fill="#f8f8f8" stroke="#bbb" />
            <path d="M5 4v4L2.5 6zM11 4v4l2.5-2z" />
        </svg>
        <span className="mt-[7px] flex-1 whitespace-nowrap text-right text-[6.9px] tracking-[0.18px]">Calculation of Target Zones completed</span>
    </div>
);

const ROWS = [
    ["Intermediate", "text-[#008000]", "neutral", "text-[#0080ff]", "up", "2/b (100%)", "0.8011", "0.94"],
    ["", "", "neutral", "text-[#0080ff]", "down", "2/b (71%)", "0.6345", "0.59"],
    ["Minor", "text-[#800040]", "neutral", "text-[#0080ff]", "up", "2/b (100%)", "0.7422", "0.81"],
    ["", "", "neutral", "text-[#0080ff]", "down", "2/b (100%)", "0.5945", "0.54"],
    ["Minute", "text-[#0000ff]", "negative", "text-[#ff0000]", "down", "2/b (73%)", "0.6408", "0.61"],
];

const Summary = () => (
    <div className="flex h-[120px] w-[270px] shrink-0 flex-col border-r-2 border-[#8c8c8c] bg-[#d4e1ee]">
        <div className="flex h-[20px] shrink-0 items-center justify-between bg-gradient-to-b from-[#bccddd] to-[#d6e3f0] pl-[2px] pr-[6px] pt-[3px] text-[7.6px] text-[#9a9fa5]">
            <span className="whitespace-pre">Summary Inspector (AUDUSD (Daily)  1-1-2000 to today - 02.05.2023,...</span>
            <CloseBox />
        </div>
        <div className="flex h-[100px] w-[264px] bg-[#f0f0f0]">
            <div className="w-[256px] overflow-hidden font-['Liberation_Sans',Arial,sans-serif] text-[8.3px] leading-[10.15px]">
                <div className="flex h-[10.5px] font-bold">
                    <span className="w-[64px]">Time frame</span>
                    <span className="w-[40.5px]">EASI</span>
                    <span className="w-[24px]">Trend</span>
                    <span className="w-[51.5px] text-right">Wave</span>
                    <span className="w-[42px] text-right">Target 1</span>
                    <span className="w-[34px] pl-[11px]">Targe</span>
                </div>
                {ROWS.map((r, i) => (
                    <div key={i} className="flex h-[10.15px]">
                        <span className={r[1] + " w-[64px] font-bold"}>{r[0]}</span>
                        <span className={r[3] + " w-[40.5px] font-bold"}>{r[2]}</span>
                        <span className="w-[24px] font-bold">{r[4]}</span>
                        <span className="w-[51.5px] whitespace-nowrap text-right">{r[5]}</span>
                        <span className="w-[42px] text-right">{r[6]}</span>
                        <span className="w-[33px] text-right">{r[7]}</span>
                    </div>
                ))}
            </div>
            <svg width="8" height="100" viewBox="0 0 8 100">
                <rect x="1" y="11" width="6" height="11" fill="#cdcdcd" />
                <path d="M2 7l2.5-3L7 7M2 93l2.5 3L7 93" fill="none" stroke="#333" strokeWidth="1.1" />
            </svg>
        </div>
    </div>
);

const Tile = ({ children, active }: { children: ReactNode; active?: boolean }) => (
    <div className={active ? "flex h-[25px] w-[33px] items-center justify-center bg-[#4c6068]" : "flex h-[25px] w-[33px] items-center justify-center"}>
        {children}
    </div>
);

const Pic = ({ children }: { children: ReactNode }) => (
    <svg width="16" height="16" viewBox="0 0 16 16">{children}</svg>
);

const RIcon = () => (
    <Pic>
        <rect width="16" height="16" fill="#134f96" />
        <path d="M2.5 3h10.500v6H7.500v-2.500M3.500 13.500V6.500h6.500M7.500 8.500v4h5" fill="none" stroke="#fff" strokeWidth="1.4" />
    </Pic>
);

const Taskbar = () => (
    <div className="flex h-[25px] shrink-0 items-center bg-gradient-to-r from-[#22383f] via-[#20343e] to-[#1a2440] text-white">
        <Tile><FaWindows size={12} /></Tile>
        <Tile><VscSearch size={12} /></Tile>
        <Tile>
            <svg width="14" height="12" viewBox="0 0 14 12" fill="none" stroke="#fff" strokeWidth="0.9">
                <path d="M2 3.5h7v5H2zM1.500 0v1.5h8V0M1.500 12v-1.500h8V12M12.5 0v3M12.5 6v6" />
                <path d="M11.500 4.500h2" />
            </svg>
        </Tile>
        <div className="w-[3px]" />
        <Tile>
            <Pic>
                <circle cx="8" cy="8" r="8" fill="#9b59f5" />
                <path d="M8 4q1.5 0 3.500 4.500q.8 2.700-3.500 2.800q-4.300-.1-3.500-2.800Q6.500 4 8 4z" fill="#fff" />
            </Pic>
        </Tile>
        <div className="w-[5px]" />
        <Tile>
            <Pic>
                <path d="M1 9q0-6 8-6q5 0 5 4q0 2-3 2q1 5-5 5q-5 0-5-5z" fill="#dde6ee" />
                <circle cx="4.5" cy="7" r="1.3" fill="#e04040" /><circle cx="8" cy="5.5" r="1.3" fill="#40a040" />
                <circle cx="4" cy="10.5" r="1.3" fill="#3080e0" /><circle cx="7.5" cy="11" r="1.2" fill="#f0b020" />
                <path d="M14 1l-4 9l-2 3" stroke="#d08840" strokeWidth="1.8" fill="none" />
            </Pic>
        </Tile>
        <Tile>
            <Pic>
                <path d="M1 2h6l1 2h7v10H1z" fill="#e8a820" />
                <path d="M1 5h14v9H1z" fill="#fcd462" />
                <path d="M3 14V9.500h10V14h-2.500v-2.500h-5V14z" fill="#2f8ce0" />
            </Pic>
        </Tile>
        <Tile>
            <Pic>
                <path d="M2 0h12v16H2z" fill="#8296a4" />
                <path d="M3.5 1.5h9v3h-9z" fill="#70d0f8" />
                <path d="M3.5 7.200h5.500M3.5 10.500h5.500M3.5 13.700h5.500" stroke="#eef" strokeWidth="1.9" strokeDasharray="2 1" />
                <path d="M10.5 6.200h2.300v8.400h-2.300z" fill="#3050a0" />
            </Pic>
        </Tile>
        <Tile>
            <Pic>
                <path d="M0 6l8-5l8 5v9H0z" fill="#0f5ea8" />
                <path d="M2 5h12v6H2z" fill="#fff" />
                <path d="M0 6l8 5l8-5v9H0z" fill="#38a8f0" />
                <path d="M0 15l8-5l8 5z" fill="#1678d0" />
            </Pic>
        </Tile>
        <Tile>
            <Pic>
                <path d="M5 4V1.500h6V4" fill="none" stroke="#28a0e8" strokeWidth="1.2" />
                <path d="M0 3h16v11q0 1.500-1.500 1.500h-13Q0 15.500 0 14z" fill="#f6f6f6" />
                <path d="M4.500 5.500h3v3h-3z" fill="#f25022" /><path d="M8.500 5.500h3v3h-3z" fill="#7fba00" />
                <path d="M4.500 9.500h3v3h-3z" fill="#00a4ef" /><path d="M8.500 9.500h3v3h-3z" fill="#ffb900" />
            </Pic>
        </Tile>
        <Tile>
            <div className="relative flex h-[15px] w-[15px] items-center justify-center">
                <FaSkype size={15} className="absolute text-[#0a94e0]" />
                <span className="relative flex h-[11px] w-[11px] items-center justify-center rounded-full bg-[#0a94e0] text-[10.5px] font-bold leading-none">S</span>
            </div>
        </Tile>
        <Tile>
            <div className="flex h-[16px] w-[16px] items-center justify-center rounded-full bg-[#25c85a]"><FaWhatsapp size={14} /></div>
        </Tile>
        <Tile>
            <div className="relative flex h-[15px] w-[15px] items-center justify-center rounded-full bg-[#2ca0dc]">
                <FaTelegramPlane size={10} />
                <span className="absolute -right-[4px] -bottom-[1px] rounded-[2px] bg-[#e53935] px-[1.5px] text-[5.5px] leading-[7px]">.95</span>
            </div>
        </Tile>
        <Tile>
            <div className="flex h-[16px] w-[16px] items-center justify-center rounded-[6px] bg-[#7360f2]"><FaViber size={13} /></div>
        </Tile>
        <Tile>
            <Pic>
                <circle cx="8" cy="8" r="7.8" fill="#fff" />
                <path d="M4 3l4 5.500L12 3M8 8v5.500" fill="none" stroke="#e01818" strokeWidth="2" />
            </Pic>
        </Tile>
        <Tile><RIcon /></Tile>
        <Tile>
            <Pic>
                <circle cx="8" cy="8" r="7.5" fill="#123a78" />
                <path d="M0.700 9l5.500 2.200" stroke="#fff" strokeWidth="3" />
                <circle cx="6" cy="11" r="2.200" fill="#fff" />
                <path d="M6 11L11 6.500" stroke="#fff" strokeWidth="2.600" />
                <circle cx="11" cy="6" r="2.500" fill="#123a78" stroke="#fff" strokeWidth="1.300" />
            </Pic>
        </Tile>
        <Tile>
            <Pic>
                <path d="M4 1l12 1l-1 11l-12-2z" fill="#dfe6ea" stroke="#8a98a0" strokeWidth="0.6" />
                <path d="M5 3l9 .5l-.5 6l-9-1z" fill="#b8dcf4" />
                <path d="M5 7l2-2l1 3l2-4l1 4l2-1" fill="none" stroke="#48a" strokeWidth="0.7" />
                <path d="M1 9l6 1v5l-6-1z" fill="#c4ccd0" />
            </Pic>
        </Tile>
        <Tile><RIcon /></Tile>
        <Tile active>
            <Pic>
                <rect width="16" height="16" fill="#e8e8e8" />
                <path d="M0 4h16M0 8h16M0 12h16M4 0v16M8 0v16M12 0v16" stroke="#aaa" strokeWidth="0.6" />
                <path d="M0 13l5-3l3 1l7-9" stroke="#d02828" strokeWidth="1.5" fill="none" />
                <path d="M9 8h7v4q-1 3-3.500 4Q10 15 9 12z" fill="#f8c020" />
                <path d="M9 8h3.500v4H9zM12.5 12H16q-1 3-3.500 4z" fill="#2878d8" />
            </Pic>
        </Tile>
        <Tile>
            <Pic>
                <rect width="16" height="16" fill="#1478d8" />
                <path d="M0 14l6-8l9 10H0z" fill="#0a3c80" />
                <path d="M8 9l3-3l5 6v4h-2z" fill="#58b8f8" />
                <circle cx="12" cy="3.500" r="1.3" fill="#fff" />
            </Pic>
        </Tile>
        <div className="flex-1" />
        <svg width="80" height="16" viewBox="1112 706 80 16" fill="none" stroke="#fff" strokeWidth="0.9">
            <path d="M1113 716l4-4l4 4" />
            <rect x="1130.500" y="708.500" width="4.500" height="8" rx="2" fill="#fff" />
            <path d="M1129.500 714q0 4 3.300 4t3.300-4M1132.800 718v2M1130.500 720h5" />
            <path d="M1144 710h4M1150 709h4v3M1144 710v8h7M1149 710.500h2.500M1151.500 714a2.500 2.500 0 1 1-1-2" />
            <circle cx="1152.300" cy="717" r="2.300" fill="#ff9800" stroke="none" />
            <path d="M1163 710h7v6h-6M1160.500 709h3v3h-3zM1162 712v6h2M1165 718.500h5" />
            <path d="M1176.500 712.500v3h1.500l2.500 2.500v-8l-2.500 2.500zM1182.500 712q1.300 2 0 4M1184.500 710.500q2.300 3.500 0 7M1186.500 709.500q3 4.500 0 9" />
        </svg>
        <span className="ml-[2px] w-[19px] text-[8px] tracking-[-0.1px]">РУС</span>
        <div className="w-[46px] -translate-y-[0.7px] text-center text-[7.8px] leading-[12px] tracking-[-0.28px]">
            <div>20:57</div>
            <div>02.05.2023</div>
        </div>
        <svg width="12" height="12" viewBox="0 0 12 12" className="mr-[12px] ml-[7px]">
            <path d="M0.5 1h10.500v8H7v2.500L4.500 9h-4z" fill="none" stroke="#fff" strokeWidth="0.9" />
        </svg>
    </div>
);

const App: React.FC = () => {
    return (
        <div className="flex h-[726px] w-[1290px] flex-col overflow-hidden bg-[#f0f0f0] font-['Open_Sans',sans-serif] text-[8px] leading-[11px] text-black">
            <Header />
            <div className="relative shrink-0">
                <MainChart />
                <DataWindow />
            </div>
            <div className="h-[5px] shrink-0 bg-[#f2f2f2]" />
            <Strip />
            <Controls />
            <div className="h-[2px] shrink-0 bg-[#a0a0a0]" />
            <div className="flex h-[120px] shrink-0">
                <Summary />
                <div className="flex w-[1020px] flex-col">
                    <div className="flex h-[20px] shrink-0 items-center justify-between bg-gradient-to-b from-[#bccddd] to-[#d6e3f0] pl-[2px] pt-[3px] text-[7.7px] text-[#9a9fa5]">
                        <span className="whitespace-pre">Bird's-eye view of AUDUSD (Daily)  1-1-2000 to today</span>
                        <CloseBox />
                    </div>
                    <BirdsEye />
                </div>
            </div>
            <div className="flex h-[15px] shrink-0 items-center whitespace-pre bg-[#f0f0f0] pl-[1.5px] pt-[2px] text-[7.9px]">
                Ptr:0.6410  Date:22.01.2025  O:-.--  H:-.--  L:-.--  C:-.--
            </div>
            <div className="h-px shrink-0 bg-white" />
            <Taskbar />
        </div>
    );
};

export default App;
